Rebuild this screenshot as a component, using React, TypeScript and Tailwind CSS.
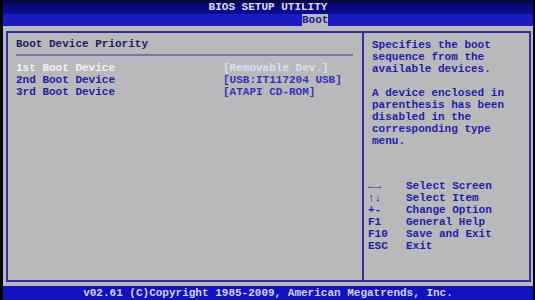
const help = [
  "Specifies the boot",
  "sequence from the",
  "available devices.",
  "",
  "A device enclosed in",
  "parenthesis has been",
  "disabled in the",
  "corresponding type",
  "menu.",
];

const keys = [
  ["←→", "Select Screen"],
  ["↑↓", "Select Item"],
  ["+-", "Change Option"],
  ["F1", "General Help"],
  ["F10", "Save and Exit"],
  ["ESC", "Exit"],
];

const devices = [
  { label: "1st Boot Device", value: "[Removable Dev.]", active: true },
  { label: "2nd Boot Device", value: "[USB:IT117204 USB]", active: false },
  { label: "3rd Boot Device", value: "[ATAPI CD-ROM]", active: false },
];

export default function App() {
  return (
    <div className="w-[535px] h-[300px] bg-black flex flex-col pl-[3px] pr-[2px] font-['Liberation_Mono',monospace] font-bold text-[11px] leading-[12px] whitespace-pre">
      <div className="h-[14px] bg-gradient-to-b from-[#05053a] via-[#0b0b86] to-[#0c0c8c] flex items-end justify-center pb-[1px] text-[#dcdcec]">
        BIOS SETUP UTILITY
      </div>
      <div className="h-[12px] bg-[#1b1bc4] flex">
        <span className="ml-[299px] bg-[#b9b9bd] text-[#1a1a96]">Boot</span>
      </div>

      <div className="flex-1 bg-[#b9b9bb] pt-[5px] pl-[3px] pr-[2px] pb-[4px] flex">
        <div className="flex-1 border-2 border-[#30309e] flex">
          <div className="w-[356px] border-r-2 border-[#30309e] pl-[8px] pr-[9px] pt-[5px]">
            <div className="text-[#1c1c5a]">Boot Device Priority</div>
            <div className="mt-[4px] h-[2px] bg-[#7474ae]" />
            <div className="mt-[6px]">
              {devices.map((d) => (
                <div key={d.label} className="flex">
                  <span className={`w-[207px] ${d.active ? "text-[#f2f2f6]" : "text-[#1e1ea2]"}`}>{d.label}</span>
                  <span className={d.active ? "text-[#dedef4]" : "text-[#3434b6]"}>{d.value}</span>
                </div>
              ))}
            </div>
          </div>

          <div className="flex-1 flex flex-col pt-[6px] text-[#1e1ea6]">
            <div className="pl-[8px]">
              {help.map((l, i) => (
                <div key={i} className="h-[12px]">{l}</div>
              ))}
            </div>
            <div className="pl-[4px] mt-[33px]">
              {keys.map(([k, d]) => (
                <div key={k} className="flex">
                  <span className="w-[38px]">{k}</span>
                  <span>{d}</span>
                </div>
              ))}
            </div>
          </div>
        </div>
      </div>

      <div className="h-[14px] bg-[#1212c0] flex items-center justify-center text-[#d4d4e6]">
        v02.61 (C)Copyright 1985-2009, American Megatrends, Inc.
      </div>
    </div>
  );
}
